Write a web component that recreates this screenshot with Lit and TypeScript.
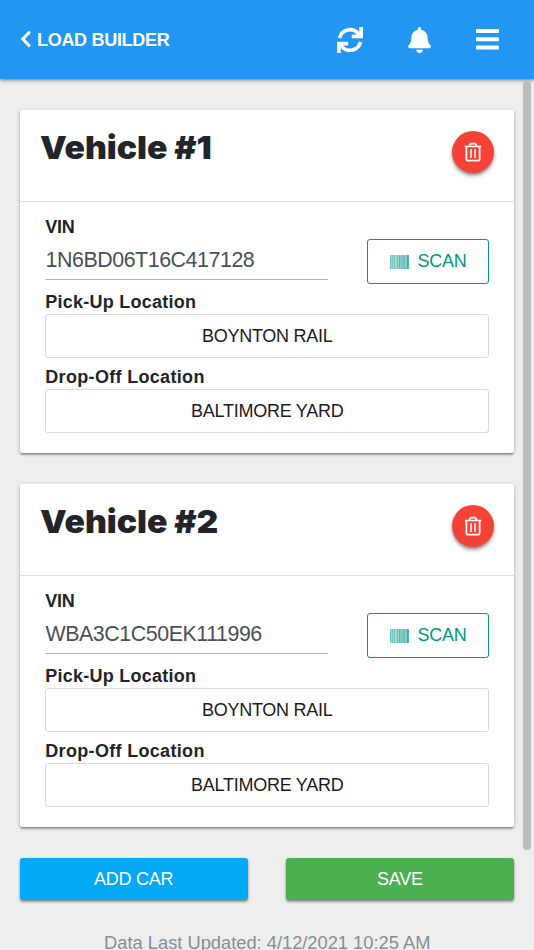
import { LitElement, html, css, svg } from "lit";
import { customElement, property } from "lit/decorators.js";

interface Vehicle {
  id: number;
  vin: string;
  pickup: string;
  dropoff: string;
}

const BARS: number[][] = [
  [0, 1.4, 0.4], [2, 1, 0.3], [3.6, 1.4, 0.4], [5.6, 0.8, 0.2], [6.8, 1.4, 0.4],
  [8.8, 1.6, 0.5], [10.9, 1.1, 0.4], [12.4, 1.4, 0.5], [14.2, 1, 0.5], [15.6, 1, 0.4],
  [17, 1.8, 0.7],
];

@customElement("vehicle-card")
class VehicleCard extends LitElement {
  @property({ attribute: false }) vehicle!: Vehicle;

  static styles = css`
    :host {
      display: block;
      box-sizing: border-box;
      height: 343.5px;
      background: #fff;
      border-radius: 2px;
      box-shadow: 0 1px 4px rgba(0, 0, 0, 0.2), 0 2px 2px rgba(0, 0, 0, 0.2), 0 2px 1px -1px rgba(0, 0, 0, 0.18);
      color: #212529;
    }
    * { box-sizing: border-box; }
    .head {
      display: flex;
      justify-content: space-between;
      height: 92px;
      padding: 21px 20px 0 20px;
      border-bottom: 1px solid #e0e0e0;
    }
    h2 {
      margin: -1px 0 0;
      font: 900 32px/36px Inter, sans-serif;
      white-space: nowrap;
      transform: scaleX(1.053);
      transform-origin: 0 0;
    }
    .trash {
      width: 42px;
      height: 42px;
      padding: 0;
      border: 0;
      border-radius: 50%;
      background: #f44336;
      display: grid;
      place-items: center;
      box-shadow: 0 3px 4px rgba(0, 0, 0, 0.3), 0 2px 2px rgba(0, 0, 0, 0.2);
    }
    .body { padding: 14px 25.5px 0; }
    .label {
      font-weight: 700;
      font-size: 18px;
      line-height: 22px;
      letter-spacing: 0.25px;
      padding-left: 0.3px;
    }
    .label.drop { letter-spacing: 0.32px; }
    .label.short { letter-spacing: -0.3px; }
    .row {
      display: flex;
      justify-content: space-between;
      align-items: flex-start;
      margin-bottom: 7px;
    }
    .entry { width: 283px; }
    .vin {
      height: 42px;
      border-bottom: 1px solid #b4b4b4;
      color: #495057;
      font-size: 21.4px;
      letter-spacing: -0.45px;
      line-height: 44px;
      padding-left: 0.5px;
      white-space: nowrap;
    }
    .scan {
      width: 122px;
      height: 44.5px;
      margin-top: 23.5px;
      display: flex;
      align-items: center;
      padding: 1px 0 0 22px;
      gap: 9px;
      background: #fff;
      border: 1.5px solid #009688;
      border-radius: 3px;
      color: #009688;
      font: 18px "Liberation Sans", Arial, sans-serif;
      letter-spacing: -0.25px;
    }
    .pick {
      display: block;
      width: 100%;
      height: 44px;
      margin: 1px 0 8px;
      padding: 1px 0 0 1px;
      border: 1px solid #dadada;
      border-radius: 3px;
      background: #fff;
      color: #1b1b1b;
      font: 18px "Liberation Sans", Arial, sans-serif;
      letter-spacing: -0.27px;
    }
    svg { display: block; }
  `;

  render() {
    const v = this.vehicle;
    return html`
      <div class="head">
        <h2>Vehicle #${v.id}</h2>
        <button class="trash" aria-label="Remove">
          <svg width="18" height="20" viewBox="0 0 18 20" fill="none" stroke="#fff">
            <path stroke-width="1.7" stroke-linejoin="round" d="M.8 4.5H17.2M2.4 4.5V17.2Q2.4 18.6 3.8 18.6H14.2Q15.6 18.6 15.6 17.2V4.5M5.2 4.2L6.2 2.1Q6.5 1.6 7.1 1.6H10.9Q11.5 1.6 11.8 2.1L12.8 4.2" />
            <path stroke-width="1.5" d="M7 7V16M11 7V16" />
          </svg>
        </button>
      </div>
      <div class="body">
        <div class="row">
          <div class="entry">
            <div class="label short">VIN</div>
            <div class="vin">${v.vin}</div>
          </div>
          <button class="scan">
            <svg width="19" height="14" viewBox="0 0 19 14" fill="#009688">
              <rect width="19" height="14" opacity=".28" />
              ${BARS.map(([x, w, o]) => svg`<rect x=${x} y="0" width=${w} height="14" opacity=${o} />`)}
            </svg>
            SCAN
          </button>
        </div>
        <div class="label">Pick-Up Location</div>
        <button class="pick">${v.pickup}</button>
        <div class="label drop">Drop-Off Location</div>
        <button class="pick">${v.dropoff}</button>
      </div>
    `;
  }
}

@customElement("app-root")
class AppRoot extends LitElement {
  private vehicles: Vehicle[] = [
    { id: 1, vin: "1N6BD06T16C417128", pickup: "BOYNTON RAIL", dropoff: "BALTIMORE YARD" },
    { id: 2, vin: "WBA3C1C50EK111996", pickup: "BOYNTON RAIL", dropoff: "BALTIMORE YARD" },
  ];

  static styles = css`
    :host {
      display: flex;
      flex-direction: column;
      height: 950px;
      overflow: hidden;
      position: relative;
      background: #eee;
      font-family: "Liberation Sans", Arial, sans-serif;
    }
    * { box-sizing: border-box; }
    header {
      flex: none;
      height: 78.5px;
      display: flex;
      align-items: center;
      justify-content: space-between;
      padding: 1px 35px 0 20px;
      background: #2196f3;
      color: #fff;
      box-shadow: 0 1px 4px rgba(0, 0, 0, 0.55);
    }
    .back {
      display: flex;
      align-items: center;
      gap: 5px;
      font-weight: 700;
      font-size: 18px;
      letter-spacing: -0.3px;
      white-space: nowrap;
    }
    .back span { padding-top: 1px; }
    .back svg { margin-top: -1px; }
    .icons {
      display: flex;
      align-items: center;
      gap: 45px;
    }
    svg { display: block; }
    main {
      display: flex;
      flex-direction: column;
      gap: 30.5px;
      padding: 31px 20px 0 19.5px;
    }
    .actions {
      display: grid;
      grid-template-columns: 1fr 1fr;
      gap: 38px;
    }
    .btn {
      height: 42.5px;
      border: 0;
      padding: 2px 0 0;
      border-radius: 3px;
      color: #fff;
      font: 18px "Liberation Sans", Arial, sans-serif;
      letter-spacing: -0.25px;
      box-shadow: 0 2px 3px rgba(0, 0, 0, 0.32), 0 1px 2px rgba(0, 0, 0, 0.2);
    }
    .add { background: #03a9f4; }
    .save { background: #4caf50; }
    .updated {
      text-align: center;
      color: #868e96;
      font-size: 18.3px;
      line-height: 23px;
      padding-left: 1px;
      white-space: nowrap;
    }
    .thumb {
      position: absolute;
      right: 3px;
      top: 81px;
      width: 8px;
      height: 769px;
      border-radius: 4px;
      background: #bdbdbd;
    }
  `;

  render() {
    return html`
      <header>
        <div class="back">
          <svg width="12" height="18" viewBox="0 0 12 18" fill="none" stroke="#fff" stroke-width="3" stroke-linecap="round">
            <path d="M9 2.6L2.8 9L9 15.4" />
          </svg>
          <span>LOAD BUILDER</span>
        </div>
        <div class="icons">
          <svg width="26" height="26" viewBox="0 0 26 26">
            <path fill="none" stroke="#fff" stroke-width="3.6" d="M2.6 11.2A10.6 10.6 0 0 1 21.2 6.6M23.4 14.8A10.6 10.6 0 0 1 4.8 19.4" />
            <path fill="#fff" d="M26 0V11.3H14.8V7.6H19.5L22.3 4.6V0ZM0 26V14.7H11.2V18.4H6.5L3.7 21.4V26Z" />
          </svg>
          <svg width="23" height="26" viewBox="0 0 448 512" fill="#fff">
            <path d="M224 512c35.320 0 63.970-28.650 63.970-64H160.030c0 35.350 28.650 64 63.970 64zm215.390-149.710c-19.320-20.760-55.470-51.990-55.470-154.290 0-77.700-54.480-139.900-127.940-155.160V32c0-17.670-14.320-32-31.980-32s-31.980 14.330-31.980 32v20.840C118.560 68.100 64.080 130.300 64.080 208c0 102.300-36.150 133.530-55.470 154.290-6 6.450-8.660 14.160-8.610 21.710.11 16.400 12.980 32 32.100 32h383.800c19.120 0 32-15.600 32.100-32 .05-7.550-2.610-15.270-8.610-21.710z" />
          </svg>
          <svg width="23" height="21" viewBox="0 0 23 21" fill="#fff">
            <rect width="23" height="4" rx=".8" />
            <rect y="8.3" width="23" height="4" rx=".8" />
            <rect y="16.6" width="23" height="4" rx=".8" />
          </svg>
        </div>
      </header>
      <main>
        ${this.vehicles.map((v) => html`<vehicle-card .vehicle=${v}></vehicle-card>`)}
        <div class="actions">
          <button class="btn add">ADD CAR</button>
          <button class="btn save">SAVE</button>
        </div>
        <div class="updated">Data Last Updated: 4/12/2021 10:25 AM</div>
      </main>
      <div class="thumb"></div>
    `;
  }
}
